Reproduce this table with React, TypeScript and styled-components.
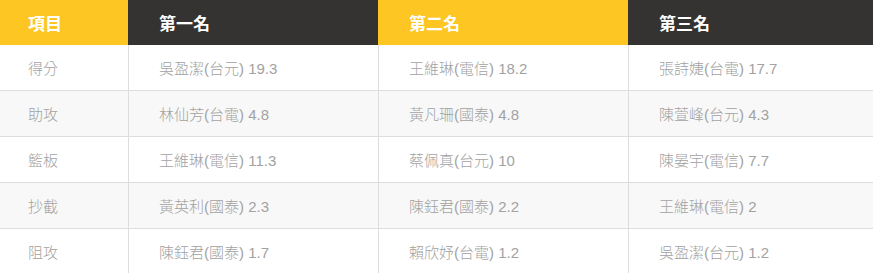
import { FunctionComponent } from "react";
import styled, { createGlobalStyle } from 'styled-components';

const GlobalStyle = createGlobalStyle`
	html, body {
		margin: 0;
		padding: 0;
		background: #fff;
	}
`

type Stat = {
	item: string,
	ranks: [string, string, string]
}

const stats: Stat[] = [
	{ item: '得分', ranks: ['吳盈潔(台元) 19.3', '王維琳(電信) 18.2', '張詩婕(台電) 17.7'] },
	{ item: '助攻', ranks: ['林仙芳(台電) 4.8', '黃凡珊(國泰) 4.8', '陳萱峰(台元) 4.3'] },
	{ item: '籃板', ranks: ['王維琳(電信) 11.3', '蔡佩真(台元) 10', '陳晏宇(電信) 7.7'] },
	{ item: '抄截', ranks: ['黃英利(國泰) 2.3', '陳鈺君(國泰) 2.2', '王維琳(電信) 2'] },
	{ item: '阻攻', ranks: ['陳鈺君(國泰) 1.7', '賴欣妤(台電) 1.2', '吳盈潔(台元) 1.2'] },
]

const headers = ['項目', '第一名', '第二名', '第三名']

const Table = styled.div`
	width: 873px;
	display: grid;
	grid-template-columns: 128px 250px 250px 1fr;
	font-family: "Liberation Sans", "Noto Sans CJK TC", sans-serif;
`

const HeadCell = styled.div<{ $dark: boolean, $first: boolean }>`
	height: 45px;
	display: flex;
	align-items: center;
	padding-left: ${props => props.$first ? '28px' : '31px'};
	background: ${props => props.$dark ? '#353331' : '#fdc623'};
	color: #fff;
	font-family: "Noto Sans CJK TC", sans-serif;
	font-size: 17px;
	font-weight: bold;
`

const Cell = styled.div<{ $shaded: boolean, $first: boolean }>`
	height: 45px;
	display: flex;
	align-items: center;
	padding-left: ${props => props.$first ? '28px' : '30px'};
	border-left: ${props => props.$first ? 'none' : '1px solid #dddddd'};
	border-bottom: 1px solid #dddddd;
	background: ${props => props.$shaded ? '#f8f8f8' : '#ffffff'};
	color: #a2a2a2;
	font-size: 15px;
	font-weight: 300;
	white-space: nowrap;
`

const App: FunctionComponent = () => {
	return (
		<>
			<GlobalStyle />
			<Table>
				{headers.map((h, i) => (
					<HeadCell key={h} $dark={i % 2 === 1} $first={i === 0}>{h}</HeadCell>
				))}
				{stats.map((row, r) => [
					<Cell key={row.item} $shaded={r % 2 === 1} $first>{row.item}</Cell>,
					...row.ranks.map((rank, c) => (
						<Cell key={row.item + c} $shaded={r % 2 === 1} $first={false}>{rank}</Cell>
					))
				])}
			</Table>
		</>
	)
}

export default App;
